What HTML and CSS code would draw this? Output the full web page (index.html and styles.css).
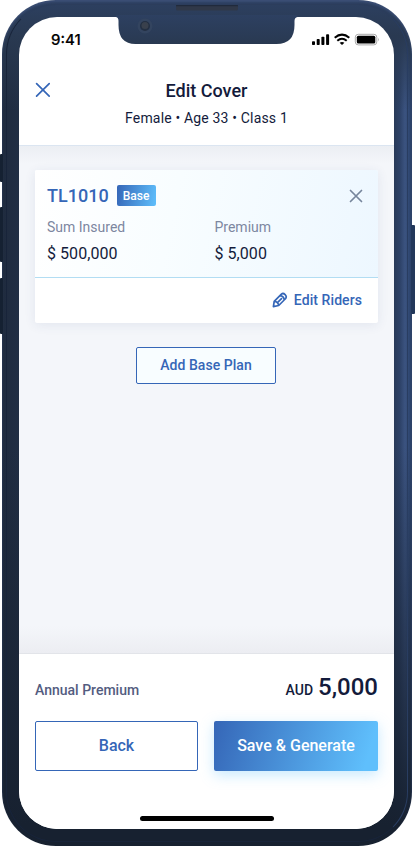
FILE: index.html
```html
<!DOCTYPE html>
<html lang="en">
<head>
<meta charset="utf-8">
<title>Edit Cover</title>
<link rel="stylesheet" href="styles.css">
</head>
<body>
<div class="phone">
  <i class="key mute"></i><i class="key up"></i><i class="key down"></i><i class="key power"></i>
  <div class="rim"></div>
  <svg class="notch" width="182" height="46" viewBox="0 0 182 46">
    <defs><linearGradient id="n" x1="0" y1="0" x2="0" y2="1"><stop offset="0" stop-color="#2d4061"/><stop offset="1" stop-color="#293951"/></linearGradient></defs>
    <path d="M0 17q2.500 .5 2.500 4v4q0 19 17 19h141q18 0 18-19v-4q0-3.500 3-4v-2H0z" fill="url(#n)"/>
    <rect x="60" y="5" width="62" height="5.500" rx="1.500" fill="#303848"/>
    <rect x="60" y="5" width="62" height="1.300" rx=".6" fill="#202a3c"/>
    <circle cx="29" cy="26" r="7.500" fill="#33445f"/><circle cx="29" cy="26" r="5" fill="#232f42"/><circle cx="29" cy="25.500" r="3.500" fill="#39404c"/>
  </svg>
  <main class="screen">
    <div class="status">
      <span class="time">9:41</span>
      <svg width="68" height="14" viewBox="0 0 68 14">
        <rect x="0" y="8.300" width="3" height="3.700" rx=".8"/><rect x="4.700" y="6" width="3" height="6" rx=".8"/><rect x="9.400" y="3.700" width="3" height="8.300" rx=".8"/><rect x="14.100" y="1.300" width="3" height="10.700" rx=".8"/>
        <g fill="none" stroke="#000" stroke-width="2"><path d="M22.700 4.700q7.300-6.200 14.600 0M25.300 7.800q4.700-4 9.400 0"/></g><path d="M27.600 9.800q2.400-1.800 4.800 0L30 12z"/>
        <rect x="43.300" y="1.300" width="21.500" height="10.600" rx="3" fill="none" stroke="#aaa"/><rect x="44.800" y="2.800" width="18.500" height="7.600" rx="1.500"/><path d="M66 4.700q1.500 1.900 0 3.800z" fill="#999"/>
      </svg>
    </div>
    <header class="header">
      <svg class="close" width="16" height="16" viewBox="0 0 16 16"><path d="M1.600 1.600l12.600 12.600M14.200 1.600L1.600 14.200"/></svg>
      <h1>Edit Cover</h1>
      <p>Female • Age 33 • Class 1</p>
    </header>
    <section class="content">
      <article class="card">
        <div class="plan">
          <div class="plan-head"><h2>TL1010</h2><span class="badge">Base</span>
            <svg class="remove" width="14" height="14" viewBox="0 0 14 14"><path d="M1.500 1.500l11 11M12.500 1.500l-11 11"/></svg>
          </div>
          <dl><div><dt>Sum Insured</dt><dd>$ 500,000</dd></div><div><dt>Premium</dt><dd>$ 5,000</dd></div></dl>
        </div>
        <div class="riders">
          <svg width="16" height="16" viewBox="0 0 16 16"><path d="M1.400 14.600l.8-5.300 7.200-7.200q1.800-1.400 3.700.5t.6 3.900l-7 7zM2.500 9.300q3.600.4 4.200 4.200M7.900 3.700q4 .4 4.300 4.300M6.200 9.800l3.300-3.200"/></svg>
          <span>Edit Riders</span>
        </div>
      </article>
      <button class="add">Add Base Plan</button>
    </section>
    <footer class="footer">
      <div class="total"><span class="label">Annual Premium</span><span class="currency">AUD</span><strong>5,000</strong></div>
      <div class="actions"><button class="back">Back</button><button class="save">Save &amp; Generate</button></div>
      <div class="home"></div>
    </footer>
  </main>
</div>
</body>
</html>
```
FILE: styles.css
```css
* { box-sizing: border-box; }
body { margin: 0; background: #fff; font-family: Roboto, sans-serif; color: #131b3b; overflow: hidden; }
h1, h2, p, dl, dd { margin: 0; }
button { font-family: inherit; padding: 0 0 2px; }
.phone {
  position: relative; width: 410px; height: 846px; margin-left: 2px; padding: 17px 18px 17px 17px;
  border-radius: 54px;
  background: linear-gradient(180deg, #2d4061 0, #293951 36px, rgba(41,57,81,0) 110px),
    linear-gradient(0deg, #172130 0, #172130 20px, rgba(23,33,48,.7) 130px, rgba(23,33,48,0) 400px),
    linear-gradient(90deg, #1f2b3e 0, #212e44 17px, #293a58 392px, #2d4268 398px, #3b5380 403px, #304873 407px, #293d61 410px);
  box-shadow: inset 0 2px 2px #3b4e75;
}
.rim { position: absolute; inset: 4px; border: 1px solid #18243a; border-top-color: #2c3d5c; border-right-color: #293d61; border-radius: 50px; }
.key { position: absolute; width: 3px; left: -2px; background: #152132; border-radius: 1px; }
.mute { top: 154px; height: 28px; }
.up { top: 207px; height: 55px; }
.down { top: 278px; height: 56px; }
.power { top: 225px; height: 89px; left: 409px; width: 4px; background: #22375a; }
.notch { position: absolute; left: 114px; top: 0; z-index: 1; }
.screen { position: relative; height: 812px; display: flex; flex-direction: column; background: #fff; border-radius: 38px; overflow: hidden; }
.status { height: 46px; padding: 16px 14px 0 32px; display: flex; justify-content: space-between; align-items: flex-start; }
.time { font: 500 15px/13px Inter, sans-serif; color: #000; -webkit-text-stroke: .2px #000; }
.header { display: grid; position: relative; justify-items: center; align-content: start; height: 83px; padding-top: 17px; border-bottom: 1px solid #dbe5f1; }
.header h1 { font-size: 18px; line-height: 22px; font-weight: 500; }
.header p { font-size: 14px; line-height: 18px; margin-top: 7px; letter-spacing: .17px; }
.close { position: absolute; left: 16px; top: 19px; fill: none; stroke: #3566b7; stroke-width: 1.7; stroke-linecap: round; }
.content { flex: 1; padding: 24px 16px 0; display: flex; flex-direction: column; align-items: center; gap: 24px; background: linear-gradient(#ebeef3 0, #f4f6fa 18px, #f4f6fa 480px, #ecedf2 100%); }
.card { width: 343px; height: 153px; background: #fff; border-radius: 2px; box-shadow: 0 2px 12px rgba(39,65,120,.09); }
.plan { height: 108px; padding: 15px 15px 0 12px; border-bottom: 1px solid #b2ddf3; border-radius: 2px 2px 0 0; background: linear-gradient(102deg, #fff, #f8fdff 40%, #edf7ff); }
.plan-head { display: flex; align-items: center; height: 22px; }
.plan-head h2 { font-size: 18px; line-height: 22px; font-weight: 500; color: #3566b7; }
.badge { width: 39px; height: 21px; margin: 0 0 1px 8px; display: grid; place-items: center; font-size: 12px; font-weight: 500; line-height: 14px; color: #fff; border-radius: 2px; background: linear-gradient(100deg, #3566b7, #5fbffc); }
.remove { margin-left: auto; fill: none; stroke: #76859c; stroke-width: 1.7; stroke-linecap: round; }
.plan dl { display: grid; grid-template-columns: 167.5px 1fr; margin-top: 11px; }
.plan dt { font-size: 14px; line-height: 18px; color: #7d879f; }
.plan dd { font-size: 16px; line-height: 20px; margin-top: 8px; letter-spacing: .05px; }
.riders { height: 45px; display: flex; justify-content: flex-end; align-items: center; gap: 6px; padding: 0 16px 1px 0; color: #3566b7; font-size: 14px; font-weight: 500; letter-spacing: .08px; }
.riders svg { fill: none; stroke: currentColor; stroke-width: 1.7; stroke-linejoin: round; stroke-linecap: round; }
.add { width: 140px; height: 37px; margin-right: 1px; border: 1px solid #3566b7; border-radius: 2px; background: #f8fdff; color: #3566b7; font-size: 14px; font-weight: 500; letter-spacing: .05px; }
.footer { height: 176px; border-top: 1px solid #e2e4e9; padding: 18px 16px 0; background: #fff; }
.total { display: flex; align-items: baseline; height: 49px; line-height: 30px; }
.label { font-size: 14px; font-weight: 500; color: #535c80; margin-right: auto; }
.currency { font-size: 14px; font-weight: 500; margin-right: 5px; }
.total strong { font-size: 24px; font-weight: 500; }
.actions { display: grid; grid-template-columns: 163px 164px; gap: 16px; }
.actions button { height: 50px; font-size: 16px; font-weight: 500; border-radius: 2px; }
.back { border: 1px solid #3566b7; background: #fff; color: #3566b7; }
.save { border: 0; color: #fff; background: linear-gradient(107deg, #3566b7, #5fbffc 92%); box-shadow: 0 4px 14px rgba(95,191,252,.35); }
.home { width: 134px; height: 5px; border-radius: 3px; background: #000; margin: 45px auto 0; }
```
